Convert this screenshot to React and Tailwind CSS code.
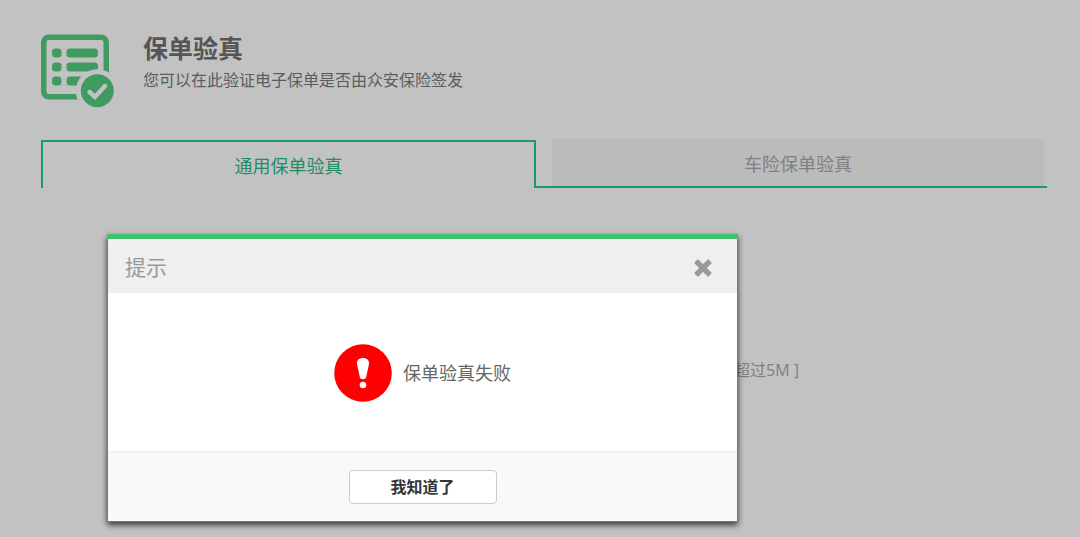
import { useState } from 'react';

const TABS = ['通用保单验真', '车险保单验真'];

function PolicyIcon() {
  return (
    <svg viewBox="0 0 74 74" className="w-[74px] h-[74px] shrink-0" fill="#3f9b5f" aria-hidden="true">
      <rect x="3.75" y="3.25" width="62.5" height="59.5" rx="5" fill="none" stroke="#3f9b5f" strokeWidth="5.5" />
      {[14.5, 28.5, 42.5].map(y => (
        <g key={y}>
          <rect x="12" y={y} width="9.5" height="9" rx="3.5" />
          <rect x="26.5" y={y} width="31.5" height="9" rx="3.5" />
        </g>
      ))}
      <circle cx="57.3" cy="56.7" r="21.5" fill="#c2c2c2" />
      <circle cx="57.3" cy="56.7" r="16.5" />
      <path d="M49.5 58l5.5 5L65 52" fill="none" stroke="#c2c2c2" strokeWidth="4.4" strokeLinecap="round" />
    </svg>
  );
}

function AlertIcon() {
  return (
    <svg viewBox="0 0 58 58" className="w-[58px] h-[58px] shrink-0" aria-hidden="true">
      <circle cx="29" cy="29" r="28.8" fill="#ff0000" />
      <path d="M29 14c4 0 6.3 2.3 6.1 5.6l-3 14c-.7 2.2-5.5 2.2-6.2 0l-3-14c-.2-3.3 2.1-5.6 6.1-5.6z" fill="#fff" />
      <circle cx="29" cy="41" r="3.3" fill="#fff" />
    </svg>
  );
}

function Dialog({ onClose }) {
  return (
    <div role="dialog" aria-labelledby="dialog-title" className="absolute left-[107px] top-[234px] w-[631px] bg-white border border-t-0 border-[#777] shadow-[0_3px_6px_rgba(0,0,0,0.7)]">
      <div className="-mx-px h-[5px] bg-[#3fc16b]" />
      <div className="h-[54px] pt-[3px] pl-[17px] pr-6 flex items-center justify-between bg-[#efefef]">
        <h2 id="dialog-title" className="text-[21px] text-[#999]">提示</h2>
        <button type="button" onClick={onClose} aria-label="关闭" className="cursor-pointer">
          <svg viewBox="0 0 20 20" className="w-5 h-5" aria-hidden="true">
            <path d="M3 3l14 14M17 3l-14 14" stroke="#999" strokeWidth="5.4" />
          </svg>
        </button>
      </div>
      <div className="h-[158px] pt-px flex items-center justify-center gap-[11px]">
        <AlertIcon />
        <p className="pt-px text-[18px] text-[#666]">保单验真失败</p>
      </div>
      <div className="h-[70px] flex items-center justify-center bg-[#f9f9f9] border-t-2 border-[#f2f2f2]">
        <button type="button" onClick={onClose} className="w-[148px] h-[34px] bg-white border border-[#ccc] rounded text-base leading-none font-bold text-[#333] cursor-pointer">我知道了</button>
      </div>
    </div>
  );
}

export default function App() {
  const [tab, setTab] = useState(0);
  const [open, setOpen] = useState(true);

  return (
    <div className="relative min-h-screen overflow-hidden bg-[#c2c2c2] font-['Open_Sans','Noto_Sans_CJK_SC',sans-serif]">
      <header className="pl-10 pt-[34px] flex gap-[29px]">
        <PolicyIcon />
        <div>
          <h1 className="text-[25px] leading-7 font-bold text-[#555]">保单验真</h1>
          <p className="text-base leading-9 text-[#5c5c5c]">您可以在此验证电子保单是否由众安保险签发</p>
        </div>
      </header>

      <div role="tablist" className="mt-[31px] ml-[41px] mr-[33px] h-[49px] flex items-end">
        {TABS.map((name, i) => (
          i === tab ? (
            <button key={name} type="button" role="tab" aria-selected="true" onClick={() => setTab(i)} className="w-[495px] h-12 pt-[2px] border-2 border-b-0 border-[#1a9a6c] text-[18px] text-[#1f8c65]">{name}</button>
          ) : (
            <div key={name} className="flex-1 h-[49px] pl-4 pr-[3px] border-b-2 border-[#1a9a6c]">
              <button type="button" role="tab" aria-selected="false" onClick={() => setTab(i)} className="w-full h-full pt-1 bg-[#bbb] text-[18px] text-[#808080]">{name}</button>
            </div>
          )
        ))}
      </div>

      <p className="mt-[170px] ml-[734px] text-base text-[#808080]">超过5M ]</p>

      {open && <Dialog onClose={() => setOpen(false)} />}
    </div>
  );
}
